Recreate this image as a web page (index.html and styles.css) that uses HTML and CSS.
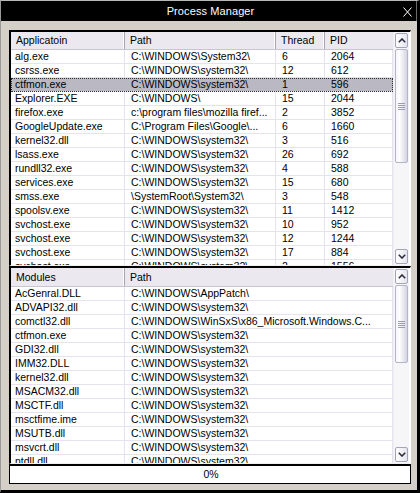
FILE: index.html
```html
<!DOCTYPE html>
<html>
<head>
<meta charset="utf-8">
<link rel="stylesheet" href="styles.css">
</head>
<body>
<div class="window">
  <div class="titlebar">
    <span></span>
    <span class="title">Process Manager</span>
    <svg class="close" width="9" height="10" viewBox="0 0 9 10"><path d="M0.5 0.5 L8.5 9.5 M8.5 0.5 L0.5 9.5" stroke="#fff" stroke-width="1" fill="none"/></svg>
  </div>
  <div class="content">
    <div class="list list-top">
      <div class="grid">
        <div class="row head cols4"><div class="cell">Applicatoin</div><div class="cell">Path</div><div class="cell">Thread</div><div class="cell">PID</div></div>
        <div class="rows">
          <div class="row cols4"><div class="cell">alg.exe</div><div class="cell">C:\WINDOWS\System32\</div><div class="cell">6</div><div class="cell">2064</div></div>
          <div class="row cols4"><div class="cell">csrss.exe</div><div class="cell">C:\WINDOWS\system32\</div><div class="cell">12</div><div class="cell">612</div></div>
          <div class="row cols4 selected"><div class="cell">ctfmon.exe</div><div class="cell">C:\WINDOWS\system32\</div><div class="cell">1</div><div class="cell">596</div></div>
          <div class="row cols4"><div class="cell">Explorer.EXE</div><div class="cell">C:\WINDOWS\</div><div class="cell">15</div><div class="cell">2044</div></div>
          <div class="row cols4"><div class="cell">firefox.exe</div><div class="cell">c:\program files\mozilla firef...</div><div class="cell">2</div><div class="cell">3852</div></div>
          <div class="row cols4"><div class="cell">GoogleUpdate.exe</div><div class="cell">C:\Program Files\Google\...</div><div class="cell">6</div><div class="cell">1660</div></div>
          <div class="row cols4"><div class="cell">kernel32.dll</div><div class="cell">C:\WINDOWS\system32\</div><div class="cell">3</div><div class="cell">516</div></div>
          <div class="row cols4"><div class="cell">lsass.exe</div><div class="cell">C:\WINDOWS\system32\</div><div class="cell">26</div><div class="cell">692</div></div>
          <div class="row cols4"><div class="cell">rundll32.exe</div><div class="cell">C:\WINDOWS\system32\</div><div class="cell">4</div><div class="cell">588</div></div>
          <div class="row cols4"><div class="cell">services.exe</div><div class="cell">C:\WINDOWS\system32\</div><div class="cell">15</div><div class="cell">680</div></div>
          <div class="row cols4"><div class="cell">smss.exe</div><div class="cell">\SystemRoot\System32\</div><div class="cell">3</div><div class="cell">548</div></div>
          <div class="row cols4"><div class="cell">spoolsv.exe</div><div class="cell">C:\WINDOWS\system32\</div><div class="cell">11</div><div class="cell">1412</div></div>
          <div class="row cols4"><div class="cell">svchost.exe</div><div class="cell">C:\WINDOWS\system32\</div><div class="cell">10</div><div class="cell">952</div></div>
          <div class="row cols4"><div class="cell">svchost.exe</div><div class="cell">C:\WINDOWS\system32\</div><div class="cell">12</div><div class="cell">1244</div></div>
          <div class="row cols4"><div class="cell">svchost.exe</div><div class="cell">C:\WINDOWS\system32\</div><div class="cell">17</div><div class="cell">884</div></div>
          <div class="row cols4"><div class="cell">svchost.exe</div><div class="cell">C:\WINDOWS\system32\</div><div class="cell">2</div><div class="cell">1556</div></div>
        </div>
      </div>
      <div class="scrollbar">
        <div class="sbtn"><svg width="8" height="5" viewBox="0 0 8 5"><path d="M0.8 4.2 L4 1 L7.2 4.2" stroke="#2c2c3a" stroke-width="1.6" fill="none"/></svg></div>
        <div class="track"><div class="thumb thumb-top"><div class="grip"></div></div></div>
        <div class="sbtn"><svg width="8" height="5" viewBox="0 0 8 5"><path d="M0.8 0.8 L4 4 L7.2 0.8" stroke="#2c2c3a" stroke-width="1.6" fill="none"/></svg></div>
      </div>
    </div>
    <div class="list list-bottom">
      <div class="grid">
        <div class="row head cols2"><div class="cell">Modules</div><div class="cell">Path</div></div>
        <div class="rows">
          <div class="row cols2"><div class="cell">AcGenral.DLL</div><div class="cell">C:\WINDOWS\AppPatch\</div></div>
          <div class="row cols2"><div class="cell">ADVAPI32.dll</div><div class="cell">C:\WINDOWS\system32\</div></div>
          <div class="row cols2"><div class="cell">comctl32.dll</div><div class="cell">C:\WINDOWS\WinSxS\x86_Microsoft.Windows.C...</div></div>
          <div class="row cols2"><div class="cell">ctfmon.exe</div><div class="cell">C:\WINDOWS\system32\</div></div>
          <div class="row cols2"><div class="cell">GDI32.dll</div><div class="cell">C:\WINDOWS\system32\</div></div>
          <div class="row cols2"><div class="cell">IMM32.DLL</div><div class="cell">C:\WINDOWS\system32\</div></div>
          <div class="row cols2"><div class="cell">kernel32.dll</div><div class="cell">C:\WINDOWS\system32\</div></div>
          <div class="row cols2"><div class="cell">MSACM32.dll</div><div class="cell">C:\WINDOWS\system32\</div></div>
          <div class="row cols2"><div class="cell">MSCTF.dll</div><div class="cell">C:\WINDOWS\system32\</div></div>
          <div class="row cols2"><div class="cell">msctfime.ime</div><div class="cell">C:\WINDOWS\system32\</div></div>
          <div class="row cols2"><div class="cell">MSUTB.dll</div><div class="cell">C:\WINDOWS\system32\</div></div>
          <div class="row cols2"><div class="cell">msvcrt.dll</div><div class="cell">C:\WINDOWS\system32\</div></div>
          <div class="row cols2"><div class="cell">ntdll.dll</div><div class="cell">C:\WINDOWS\system32\</div></div>
        </div>
      </div>
      <div class="scrollbar">
        <div class="sbtn"><svg width="8" height="5" viewBox="0 0 8 5"><path d="M0.8 4.2 L4 1 L7.2 4.2" stroke="#2c2c3a" stroke-width="1.6" fill="none"/></svg></div>
        <div class="track"><div class="thumb thumb-bottom"><div class="grip"></div></div></div>
        <div class="sbtn"><svg width="8" height="5" viewBox="0 0 8 5"><path d="M0.8 0.8 L4 4 L7.2 0.8" stroke="#2c2c3a" stroke-width="1.6" fill="none"/></svg></div>
      </div>
    </div>
    <div class="status">0%</div>
  </div>
</div>
</body>
</html>
```
FILE: styles.css
```css
html, body {
  margin: 0;
  padding: 0;
  background: #d4d0c8;
}
body {
  font-family: "Liberation Sans", Arial, sans-serif;
  font-size: 10.5px;
  color: #000;
}
.window {
  width: 420px;
  height: 493px;
  box-sizing: border-box;
  background: #d4d0c8;
  border-top: 1px solid #b8b8b8;
  border-left: 1px solid #9a9a9a;
  border-right: 3px solid #000;
  border-bottom: 3px solid #000;
  display: flex;
  flex-direction: column;
}
.titlebar {
  height: 20px;
  background: #000;
  color: #fff;
  display: grid;
  grid-template-columns: 1fr auto 1fr;
  align-items: center;
  border-right: 1px solid #6a6a6a;
}
.title {
  font-size: 11px;
  padding-left: 4px;
  letter-spacing: 0.1px;
}
.close {
  justify-self: end;
  margin-right: 4px;
  margin-top: 1px;
}
.content {
  flex: 1;
  display: flex;
  flex-direction: column;
  padding: 9px 6px 6px 8px;
}
.list {
  display: flex;
  background: #fff;
  border-top: 2px solid #000;
  border-left: 2px solid #000;
  border-right: 1px solid #fff;
  border-bottom: 1px solid #f0f0f0;
  overflow: hidden;
}
.list-top { height: 236px; box-sizing: border-box; }
.list-bottom { height: 198px; box-sizing: border-box; }
.grid {
  width: 382px;
  display: flex;
  flex-direction: column;
  overflow: hidden;
}
.row {
  display: grid;
  height: 14px;
  box-sizing: border-box;
  border-bottom: 1px solid #e6e2ee;
  line-height: 13px;
  white-space: nowrap;
}
.cols4 { grid-template-columns: 114px 151px 49px 68px; }
.cols2 { grid-template-columns: 114px 268px; }
.cell {
  overflow: hidden;
  padding-left: 6px;
  border-right: 1px solid #e6e2ee;
}
.cell:first-child { padding-left: 4px; }
.head {
  height: 18px;
  line-height: 17px;
  background: #ebe8f0;
  border-bottom: 1px solid #c8c4d0;
}
.head .cell {
  border-right: 1px solid #a8a4b4;
  box-shadow: inset -1px 0 #ffffff;
  padding-left: 5px;
}
.head .cell:last-child { border-right: none; box-shadow: none; }
.list-bottom .head { height: 19px; line-height: 18px; }
.rows { display: flex; flex-direction: column; }
.selected {
  background: #b9b8c3;
  outline: 1px dotted #303030;
  outline-offset: -1px;
}
.selected .cell { border-right-color: #b9b8c3; }
.scrollbar {
  width: 16px;
  box-sizing: border-box;
  background: #f6f6f8;
  border-left: 1px solid #f0f0f4;
  padding: 1px 1px 1px 1px;
  display: flex;
  flex-direction: column;
}
.sbtn {
  height: 15px;
  box-sizing: border-box;
  border: 1px solid #a4a4b8;
  border-radius: 2px;
  background: linear-gradient(to right, #ffffff, #e4e4ee);
  display: flex;
  align-items: center;
  justify-content: center;
}
.track {
  flex: 1;
  display: flex;
  flex-direction: column;
}
.thumb {
  box-sizing: border-box;
  border: 1px solid #b4b4c8;
  border-radius: 2px;
  background: linear-gradient(to right, #f4f4fa, #ffffff 30%, #d4d4e4);
  display: flex;
  align-items: center;
  justify-content: center;
}
.thumb-top { margin-top: 1px; height: 114px; }
.thumb-bottom { margin-top: 1px; height: 78px; }
.grip {
  width: 7px;
  height: 7px;
  background: repeating-linear-gradient(to bottom, #9c9cb0 0 1px, transparent 1px 2px);
}
.status {
  height: 20px;
  box-sizing: border-box;
  background: #fff;
  border: 1px solid #000;
  border-top: 2px solid #000;
  text-align: center;
  line-height: 17px;
  padding-left: 2px;
}
```
